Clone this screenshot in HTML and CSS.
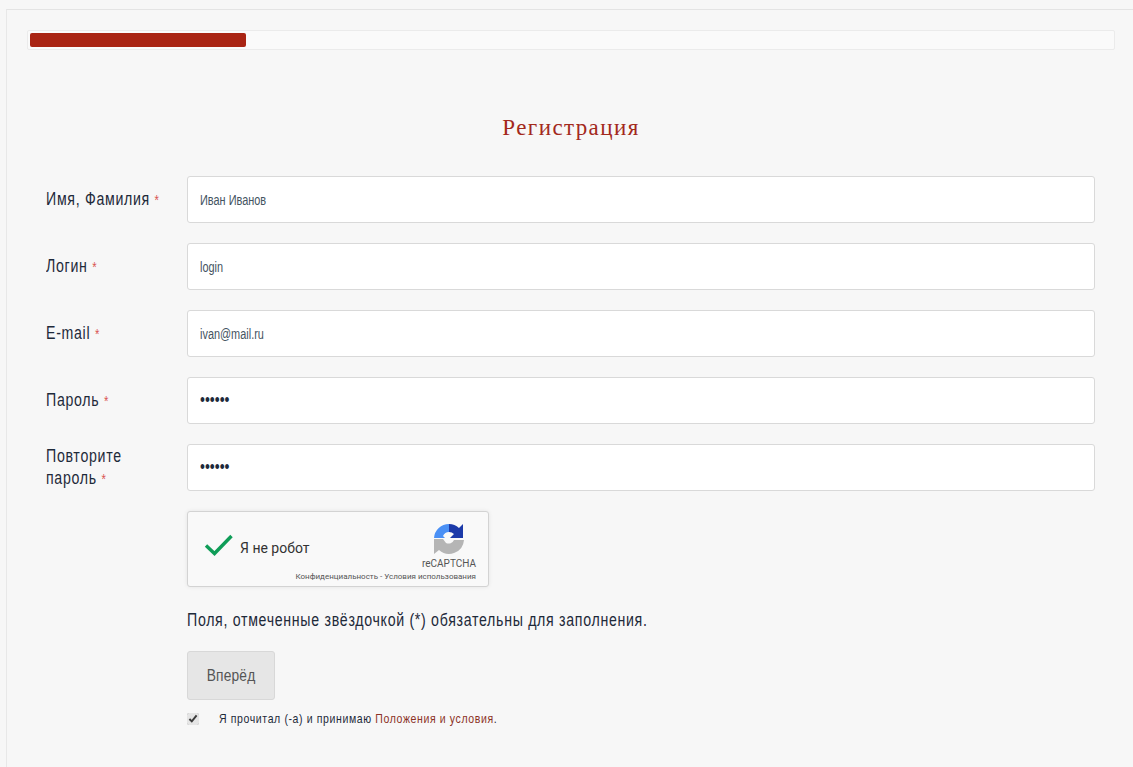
FILE: index.html
```html
<!DOCTYPE html>
<html lang="ru">
<head>
<meta charset="utf-8">
<title>Регистрация</title>
<link rel="stylesheet" href="styles.css">
</head>
<body>
<main class="panel">
  <div class="progress"><div class="progress-fill"></div></div>
  <h1 class="title">Регистрация</h1>
  <form class="form">
    <div class="row">
      <label class="label"><span class="narrow">Имя, Фамилия <span class="req">*</span></span></label>
      <div class="field"><input class="input" type="text" value="Иван Иванов"></div>
    </div>
    <div class="row">
      <label class="label"><span class="narrow">Логин <span class="req">*</span></span></label>
      <div class="field"><input class="input" type="text" value="login"></div>
    </div>
    <div class="row">
      <label class="label"><span class="narrow">E-mail <span class="req">*</span></span></label>
      <div class="field"><input class="input" type="text" value="ivan@mail.ru"></div>
    </div>
    <div class="row">
      <label class="label"><span class="narrow">Пароль <span class="req">*</span></span></label>
      <div class="field"><input class="input input-pass" type="password" value="123456"></div>
    </div>
    <div class="row">
      <label class="label"><span class="narrow">Повторите<br>пароль <span class="req">*</span></span></label>
      <div class="field"><input class="input input-pass" type="password" value="123456"></div>
    </div>
    <div class="rest">
      <div class="captcha">
        <svg class="captcha-check" width="30" height="22" viewBox="0 0 30 22"><path d="M2 11.5 L10.5 19.5 L27.5 2" fill="none" stroke="#0f9d58" stroke-width="3.4"/></svg>
        <span class="captcha-text">Я не робот</span>
        <div class="captcha-brand">
          <svg class="captcha-logo" width="32" height="32" viewBox="0 0 32 32">
            <path d="M1 15 A15 15 0 0 1 16 1 V9 A7 7 0 0 0 10 13 L12 15Z" fill="#4a90f5"/>
            <path d="M16 1 A15 15 0 0 1 26 5 L30 1 V15 H17 L21 11 A7 7 0 0 0 16 9Z" fill="#1c3aa9"/>
            <path d="M1 16 H10 L13 20 A6 6 0 0 0 21 17 H31 A15 15 0 0 1 6 27 L1 31Z" fill="#b5b5b5"/>
          </svg>
          <span class="captcha-name">reCAPTCHA</span>
        </div>
        <span class="captcha-links">Конфиденциальность - Условия использования</span>
      </div>
      <p class="note"><span class="narrow">Поля, отмеченные звёздочкой (*) обязательны для заполнения.</span></p>
      <button class="submit" type="button"><span class="narrow narrow-center">Вперёд</span></button>
      <div class="terms">
        <input class="terms-box" type="checkbox" checked>
        <span class="narrow">Я прочитал (-а) и принимаю <a class="terms-link" href="#">Положения и условия</a>.</span>
      </div>
    </div>
  </form>
</main>
</body>
</html>
```
FILE: styles.css
```css
* { box-sizing: border-box; }
html, body { margin: 0; padding: 0; height: 100%; overflow: hidden; background: #f7f7f7; }
body { font-family: "Liberation Sans", sans-serif; color: #1e2a3a; }
.narrow {
  display: inline-block;
  white-space: nowrap;
  transform: scaleX(.81);
  transform-origin: 0 50%;
}
.narrow-center { transform-origin: 50% 50%; }
.panel {
  margin: 9px 0 0 6px;
  padding: 20px 18px 0 20px;
  border-top: 1px solid #e4e4e4;
  border-left: 1px solid #e8e8e8;
  height: 758px;
}
.progress {
  height: 20px;
  padding: 2px;
  background: #fafafa;
  border: 1px solid #ebebeb;
  border-radius: 2px;
}
.progress-fill {
  width: 216px;
  height: 14px;
  background: #a92413;
  border-radius: 2px;
}
.title {
  margin: 63px 0 33px;
  height: 30px;
  font: 400 23px/30px "Liberation Serif", serif;
  letter-spacing: 1.4px;
  color: #a3291c;
  text-align: center;
}
.form { padding: 0 20px 0 19px; }
.row {
  display: flex;
  align-items: center;
  margin-bottom: 20px;
}
.label {
  flex: 0 0 141px;
  font-size: 17.5px;
  line-height: 22px;
  letter-spacing: 0.85px;
}
.req { color: #d9534f; font-size: 14px; }
.field {
  flex: 1;
  display: flex;
  align-items: center;
  height: 47px;
  padding: 0 12px;
  background: #fff;
  border: 1px solid #d9d9d9;
  border-radius: 3px;
  overflow: hidden;
}
.input {
  flex: none;
  width: 125%;
  height: 30px;
  padding: 0;
  background: transparent;
  border: 0;
  font-family: "Liberation Sans", sans-serif;
  font-size: 14px;
  color: #44545f;
  outline: none;
  transform: scaleX(.78);
  transform-origin: 0 50%;
}
.input-pass { font-size: 18px; color: #1e2a3a; }
.rest { padding-left: 141px; }
.captcha {
  position: relative;
  width: 302px;
  height: 76px;
  background: #f9f9f9;
  border: 1px solid #d3d3d3;
  border-radius: 3px;
  box-shadow: 0 0 4px rgba(0,0,0,.08);
  font-family: Roboto, sans-serif;
}
.captcha-check { position: absolute; left: 16px; top: 22px; }
.captcha-text { position: absolute; left: 52px; top: 27px; font-size: 14px; line-height: 18px; color: #333; }
.captcha-brand { position: absolute; right: 12px; top: 11px; display: flex; flex-direction: column; align-items: center; }
.captcha-name { font-size: 10px; line-height: 12px; color: #555; margin-top: 3px; }
.captcha-links { position: absolute; right: 12px; bottom: 4px; font-size: 8px; line-height: 10px; color: #555; }
.note {
  margin: 22px 0 20px;
  font-size: 17.5px;
  line-height: 22px;
  letter-spacing: 0.85px;
}
.submit {
  display: block;
  width: 88px;
  height: 49px;
  background: #e6e6e6;
  border: 1px solid #d8d8d8;
  border-radius: 3px;
  font-family: inherit;
  font-size: 17px;
  letter-spacing: 0.2px;
  color: #555;
}
.terms {
  display: flex;
  align-items: center;
  margin-top: 11px;
  font-size: 13px;
  line-height: 16px;
  letter-spacing: 0.75px;
}
.terms-box { margin: 0 20px 0 0; width: 12px; height: 12px; accent-color: #e5e5e5; flex: none; }
.terms-link { color: #8c3226; text-decoration: none; }
```
